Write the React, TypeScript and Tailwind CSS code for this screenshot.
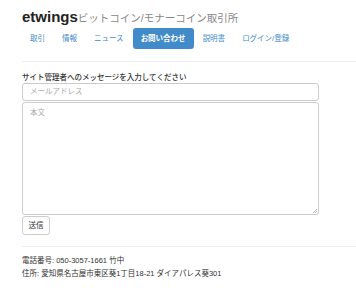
import React from "react";

const navItems = ["取引", "情報", "ニュース", "お問い合わせ", "説明書", "ログイン/登録"];

export default function App() {
  const font = { fontFamily: '"Liberation Sans", "Noto Sans CJK JP", sans-serif' };

  return (
    <div className="w-[356px] h-[300px] overflow-hidden bg-white text-[#333]" style={font}>
      <div className="pl-[22px]">
        {/* header */}
        <div className="pt-[8px] h-[28px] flex items-baseline whitespace-nowrap">
          <span className="text-[15px] font-bold leading-[18px] text-[#222]">etwings</span>
          <span className="text-[10.5px] text-[#888] leading-[18px]">ビットコイン/モナーコイン取引所</span>
        </div>

        {/* nav pills */}
        <ul className="flex gap-[1px] h-[21px]">
          {navItems.map((item, i) => (
            <li
              key={i}
              className={
                i === 3
                  ? "px-[8px] h-[21px] flex items-center rounded-[3px] bg-[#428bca] text-white text-[7.5px] font-bold whitespace-nowrap"
                  : "px-[8px] h-[21px] flex items-center text-[#428bca] text-[7.5px] whitespace-nowrap"
              }
            >
              {item}
            </li>
          ))}
        </ul>

        <div className="mt-[12px] h-px bg-[#eee]" />

        {/* form */}
        <div className="pt-[10px]">
          <div className="text-[7.5px] leading-[11px] font-medium text-[#333]">
            サイト管理者へのメッセージを入力してください
          </div>
          <div className="w-[297px]">
            <div className="h-[18px] border border-[#ccc] rounded-[3px] px-[7px] flex items-center text-[7.5px] text-[#aaa]">
              メールアドレス
            </div>
            <div className="relative mt-[1px] h-[113px] border border-[#ccc] rounded-[3px] px-[7px] pt-[4px] text-[7.5px] text-[#aaa]">
              本文
              <svg className="absolute right-[1px] bottom-[1px]" width="5" height="5" viewBox="0 0 5 5">
                <path d="M1 5L5 1M3 5L5 3" stroke="#999" strokeWidth="0.7" />
              </svg>
            </div>
          </div>
          <div className="mt-[1px] w-[28px] h-[19px] border border-[#ccc] rounded-[3px] flex items-center justify-center text-[7.5px] text-[#333]">
            送信
          </div>
        </div>

        <div className="mt-[11px] h-px bg-[#eee]" />

        {/* footer */}
        <div className="pt-[7px] text-[7.5px] leading-[13px] text-[#333] whitespace-nowrap">
          <div>電話番号: 050-3057-1661 竹中</div>
          <div>住所: 愛知県名古屋市東区葵1丁目18-21 ダイアパレス葵301</div>
        </div>
      </div>
    </div>
  );
}
